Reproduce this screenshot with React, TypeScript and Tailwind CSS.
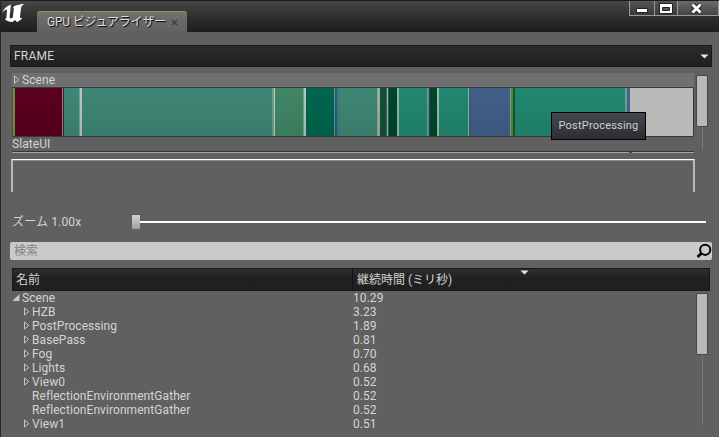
import clsx from "clsx";

type Segment = { width: number; color: string };

const segments: Segment[] = [
  { width: 1, color: "#3d6426" },
  { width: 2, color: "#7e8a52" },
  { width: 47, color: "#5a001f" },
  { width: 1, color: "#a67d92" },
  { width: 1, color: "#34273b" },
  { width: 15, color: "#3f8675" },
  { width: 1, color: "#7ba397" },
  { width: 2, color: "#b9c7c1" },
  { width: 190, color: "#3f8675" },
  { width: 2, color: "#6f9d90" },
  { width: 1, color: "#bccfc6" },
  { width: 28, color: "#3f8666" },
  { width: 1, color: "#73a18a" },
  { width: 2, color: "#b0c7ba" },
  { width: 28, color: "#00664d" },
  { width: 1, color: "#5a9191" },
  { width: 2, color: "#2d5784" },
  { width: 2, color: "#3c7a7c" },
  { width: 38, color: "#3f8675" },
  { width: 1, color: "#8ba79c" },
  { width: 2, color: "#9fb0a6" },
  { width: 6, color: "#135037" },
  { width: 1, color: "#40695a" },
  { width: 1, color: "#a3b1ad" },
  { width: 1, color: "#245e50" },
  { width: 8, color: "#00462a" },
  { width: 2, color: "#8fb5a5" },
  { width: 28, color: "#218770" },
  { width: 1, color: "#71a69a" },
  { width: 1, color: "#5f7b99" },
  { width: 1, color: "#24504e" },
  { width: 7, color: "#00462a" },
  { width: 2, color: "#9ab7aa" },
  { width: 29, color: "#218770" },
  { width: 1, color: "#87b3a6" },
  { width: 2, color: "#33606f" },
  { width: 39, color: "#425f8a" },
  { width: 1, color: "#8698a0" },
  { width: 2, color: "#59832a" },
  { width: 2, color: "#115a31" },
  { width: 110, color: "#218770" },
  { width: 2, color: "#68a397" },
  { width: 3, color: "#48638a" },
  { width: 63, color: "#bababa" },
];

type Row = { name: string; time: string; state: "open" | "closed" | "leaf" };

const rows: Row[] = [
  { name: "Scene", time: "10.29", state: "open" },
  { name: "HZB", time: "3.23", state: "closed" },
  { name: "PostProcessing", time: "1.89", state: "closed" },
  { name: "BasePass", time: "0.81", state: "closed" },
  { name: "Fog", time: "0.70", state: "closed" },
  { name: "Lights", time: "0.68", state: "closed" },
  { name: "View0", time: "0.52", state: "closed" },
  { name: "ReflectionEnvironmentGather", time: "0.52", state: "leaf" },
  { name: "ReflectionEnvironmentGather", time: "0.52", state: "leaf" },
  { name: "View1", time: "0.51", state: "closed" },
];

function Logo() {
  return (
    <svg className="mt-[3px] h-5 w-6 shrink-0" viewBox="0 0 24 20" fill="#fff">
      <path d="M1 10.2C2.4 5.8 5.6 2.6 10.4 1.4 9.6 2.5 9.7 3.4 9.6 4.8L8.6 14c-.1 1.5 1.7 1.9 3.2.6l1-8.6c.1-1.1-.3-1.5-1.2-1.3 1.6-1.8 3.6-2.2 5.5-2.6 1.6-.7 3.6-1 6.4-1.1-2.2 1-3.3 2.2-3.5 4l-1 8.8c-.1 1.4 1 1.6 2.5.6-1.3 2.1-3.3 3.5-5.6 4.5l-2-1.9-2.4 2c-3.1 0-6-1-7.8-2.9 1.2 0 1.6-.7 1.7-1.8L6 7.2C6.2 5.6 3.2 7 1 10.2Z" />
    </svg>
  );
}

function Expander({ open = false }: { open?: boolean }) {
  return open ? (
    <svg className="-mt-px h-2 w-2 shrink-0" viewBox="0 0 8 8">
      <path d="M7.5 0v7H.3z" fill="#c6c6c6" />
    </svg>
  ) : (
    <svg className="-mt-px h-[9px] w-[6px] shrink-0" viewBox="0 0 6 9">
      <path d="M.5 1v7L4.8 4.5z" fill="none" stroke="#c6c6c6" />
    </svg>
  );
}

function Scrollbar({ thumb }: { thumb: string }) {
  return (
    <div className="flex w-3 shrink-0 flex-col items-center">
      <div className={clsx("w-3 shrink-0 rounded-[2px] border border-[#464646] bg-[#b9b9b9]", thumb)} />
      <div className="w-px flex-1 bg-[#777]" />
    </div>
  );
}

function TitleBar() {
  return (
    <header className="flex h-8 shrink-0 bg-linear-to-b from-[#484848] via-[#303030] to-[#1c1c1c] shadow-[inset_0_1px_#1b1b1b]">
      <Logo />
      <div className="ml-3 mt-[11px] flex h-[21px] w-[150px] items-center rounded-t-[3px] border-t border-[#a58c48] bg-linear-to-b from-[#717171] to-[#616161] pl-[10px]">
        <span className="whitespace-nowrap text-[12px] tracking-[-0.2px] text-[#dedede] [text-shadow:1px_1px_1px_#000]">
          GPU ビジュアライザー
        </span>
        <svg className="ml-[5px] mt-px size-[7px] shrink-0" viewBox="0 0 7 7" stroke="#3c3c3c" strokeWidth="1.2">
          <path d="M1 1l5 5M6 1L1 6" />
        </svg>
      </div>
      <div className="ml-auto mt-px flex h-[15px]">
        <div className="w-[26px] border border-t-0 border-[#999] bg-linear-to-b from-[#555] to-[#393939]">
          <svg className="h-[14px] w-6" viewBox="0 0 24 14">
            <path d="M6.5 7.5h11v4h-11z" fill="#fff" stroke="#222" />
          </svg>
        </div>
        <div className="w-[23px] border border-l-0 border-t-0 border-[#999] bg-linear-to-b from-[#555] to-[#393939]">
          <svg className="h-[14px] w-[22px]" viewBox="0 0 22 14">
            <path d="M4.5 2.5h13v10h-13z" fill="#fff" stroke="#222" />
            <path d="M7.5 6.5h7v3h-7z" fill="#555" stroke="#222" />
          </svg>
        </div>
        <div className="w-[41px] border border-l-0 border-t-0 border-[#999] bg-linear-to-b from-[#6b6b6b] to-[#444]">
          <svg className="h-[14px] w-10" viewBox="0 0 40 14">
            <path d="M14.5 3.5l8 8M22.5 3.5l-8 8" stroke="#222" strokeWidth="5" />
            <path d="M14.5 3.5l8 8M22.5 3.5l-8 8" stroke="#fff" strokeWidth="2.9" />
          </svg>
        </div>
      </div>
    </header>
  );
}

function Timeline() {
  return (
    <section className="ml-[11px] mt-[6px] flex h-20 shrink-0 gap-[2px]">
      <div className="w-[682px]">
        <div className="flex h-[14px] items-center bg-[#707070] pl-[2px]">
          <Expander />
          <span className="ml-[2px]">Scene</span>
        </div>
        <div className="relative flex h-[50px] overflow-hidden rounded-r-[2px] border-y border-r border-[#303d39]">
          {segments.map((segment, i) => (
            <div key={i} className="shrink-0" style={{ width: segment.width, backgroundColor: segment.color }} />
          ))}
          <div className="absolute inset-y-0 left-0 w-[617px] bg-linear-to-b from-transparent to-black/8" />
        </div>
        <div className="h-[14px] leading-[14px]">SlateUI</div>
        <div className="flex h-[2px] border-t border-[#353535]">
          <div className="h-px w-[617px] bg-[#a5a5a5]" />
          <div className="h-px w-[3px] bg-[#45454d]" />
          <div className="h-px flex-1 bg-[#a5a5a5]" />
        </div>
      </div>
      <div className="flex pb-[3px] pt-[2px]">
        <Scrollbar thumb="h-[52px]" />
      </div>
    </section>
  );
}

function Tooltip() {
  return (
    <div className="absolute left-[550px] top-[112px] flex h-7 w-[95px] items-center justify-center border border-black bg-linear-to-b from-[#454950] to-[#2b2d31] text-[11px] tracking-[0.2px] text-[#cfcfcf]">
      PostProcessing
    </div>
  );
}

export default function App() {
  return (
    <main className="relative flex h-[437px] w-[719px] flex-col overflow-hidden border-l border-[#252525] bg-[#606060] font-[Roboto,'Noto_Sans_CJK_JP',sans-serif] text-[12px] leading-[14px] tracking-[0.07px] text-[#d4d4d4]">
      <TitleBar />
      <div className="ml-[9px] mt-[13px] flex h-[22px] w-[702px] shrink-0 items-center justify-between border border-[#191919] bg-linear-to-b from-[#2b2b2b] to-[#202020] pl-[3px] pr-[2px]">
        <span className="tracking-[0.2px]">FRAME</span>
        <svg className="h-[5px] w-[9px]" viewBox="0 0 9 5">
          <path d="M.5.5h8l-4 4z" fill="#e8e8e8" />
        </svg>
      </div>
      <Timeline />
      <div className="ml-[10px] mt-[6px] h-[33px] w-[684px] shrink-0 border-x-2 border-t border-x-[#b9b9b9] border-t-white shadow-[inset_0_1px_#8b8b8b]" />
      <div className="ml-[11px] mt-[23px] flex h-[14px] shrink-0 items-center">
        <span className="w-[120px] tracking-[0.15px]">ズーム 1.00x</span>
        <div className="h-[14px] w-2 rounded-[1px] bg-linear-to-b from-[#d4d4d4] to-[#a0a0a0]" />
        <div className="h-[2px] w-[566px] bg-white" />
      </div>
      <div className="ml-[9px] mt-[13px] flex h-[18px] w-[702px] shrink-0 items-center justify-between rounded-[2px] bg-[#cacaca] pl-1">
        <span className="text-[#858585]">検索</span>
        <svg className="h-[16px] w-[16px]" viewBox="0 0 16 16" fill="none" stroke="#050505">
          <circle cx="9.2" cy="6.8" r="5.1" strokeWidth="2" />
          <path d="M5.5 10.3L1.5 14" strokeWidth="2.8" />
        </svg>
      </div>
      <div className="relative ml-[11px] mt-2 flex h-[23px] w-[698px] shrink-0 items-center border border-[#191919] bg-linear-to-b from-[#2e2e2e] via-[#202020] to-[#202020]">
        <span className="w-[339px] pl-[3px]">名前</span>
        <span className="flex h-full items-center border-l border-[#111] pl-1 tracking-normal">継続時間 (ミリ秒)</span>
        <svg className="absolute left-[507px] top-px h-[5px] w-[9px]" viewBox="0 0 9 5">
          <path d="M.5.5h8l-4 4z" fill="#e8e8e8" />
        </svg>
      </div>
      <div className="ml-[11px] flex flex-1">
        <div className="w-[684px]">
          {rows.map((row, i) => (
            <div key={i} className="flex h-[14px] items-center">
              <div className={clsx("flex w-[341px] items-center", row.state !== "open" && "pl-3")}>
                {row.state === "leaf" ? <span className="w-[6px]" /> : <Expander open={row.state === "open"} />}
                <span className="ml-[2px]">{row.name}</span>
              </div>
              <span>{row.time}</span>
            </div>
          ))}
        </div>
        <div className="flex pb-3 pt-[2px]">
          <Scrollbar thumb="h-[62px]" />
        </div>
      </div>
      <Tooltip />
    </main>
  );
}
